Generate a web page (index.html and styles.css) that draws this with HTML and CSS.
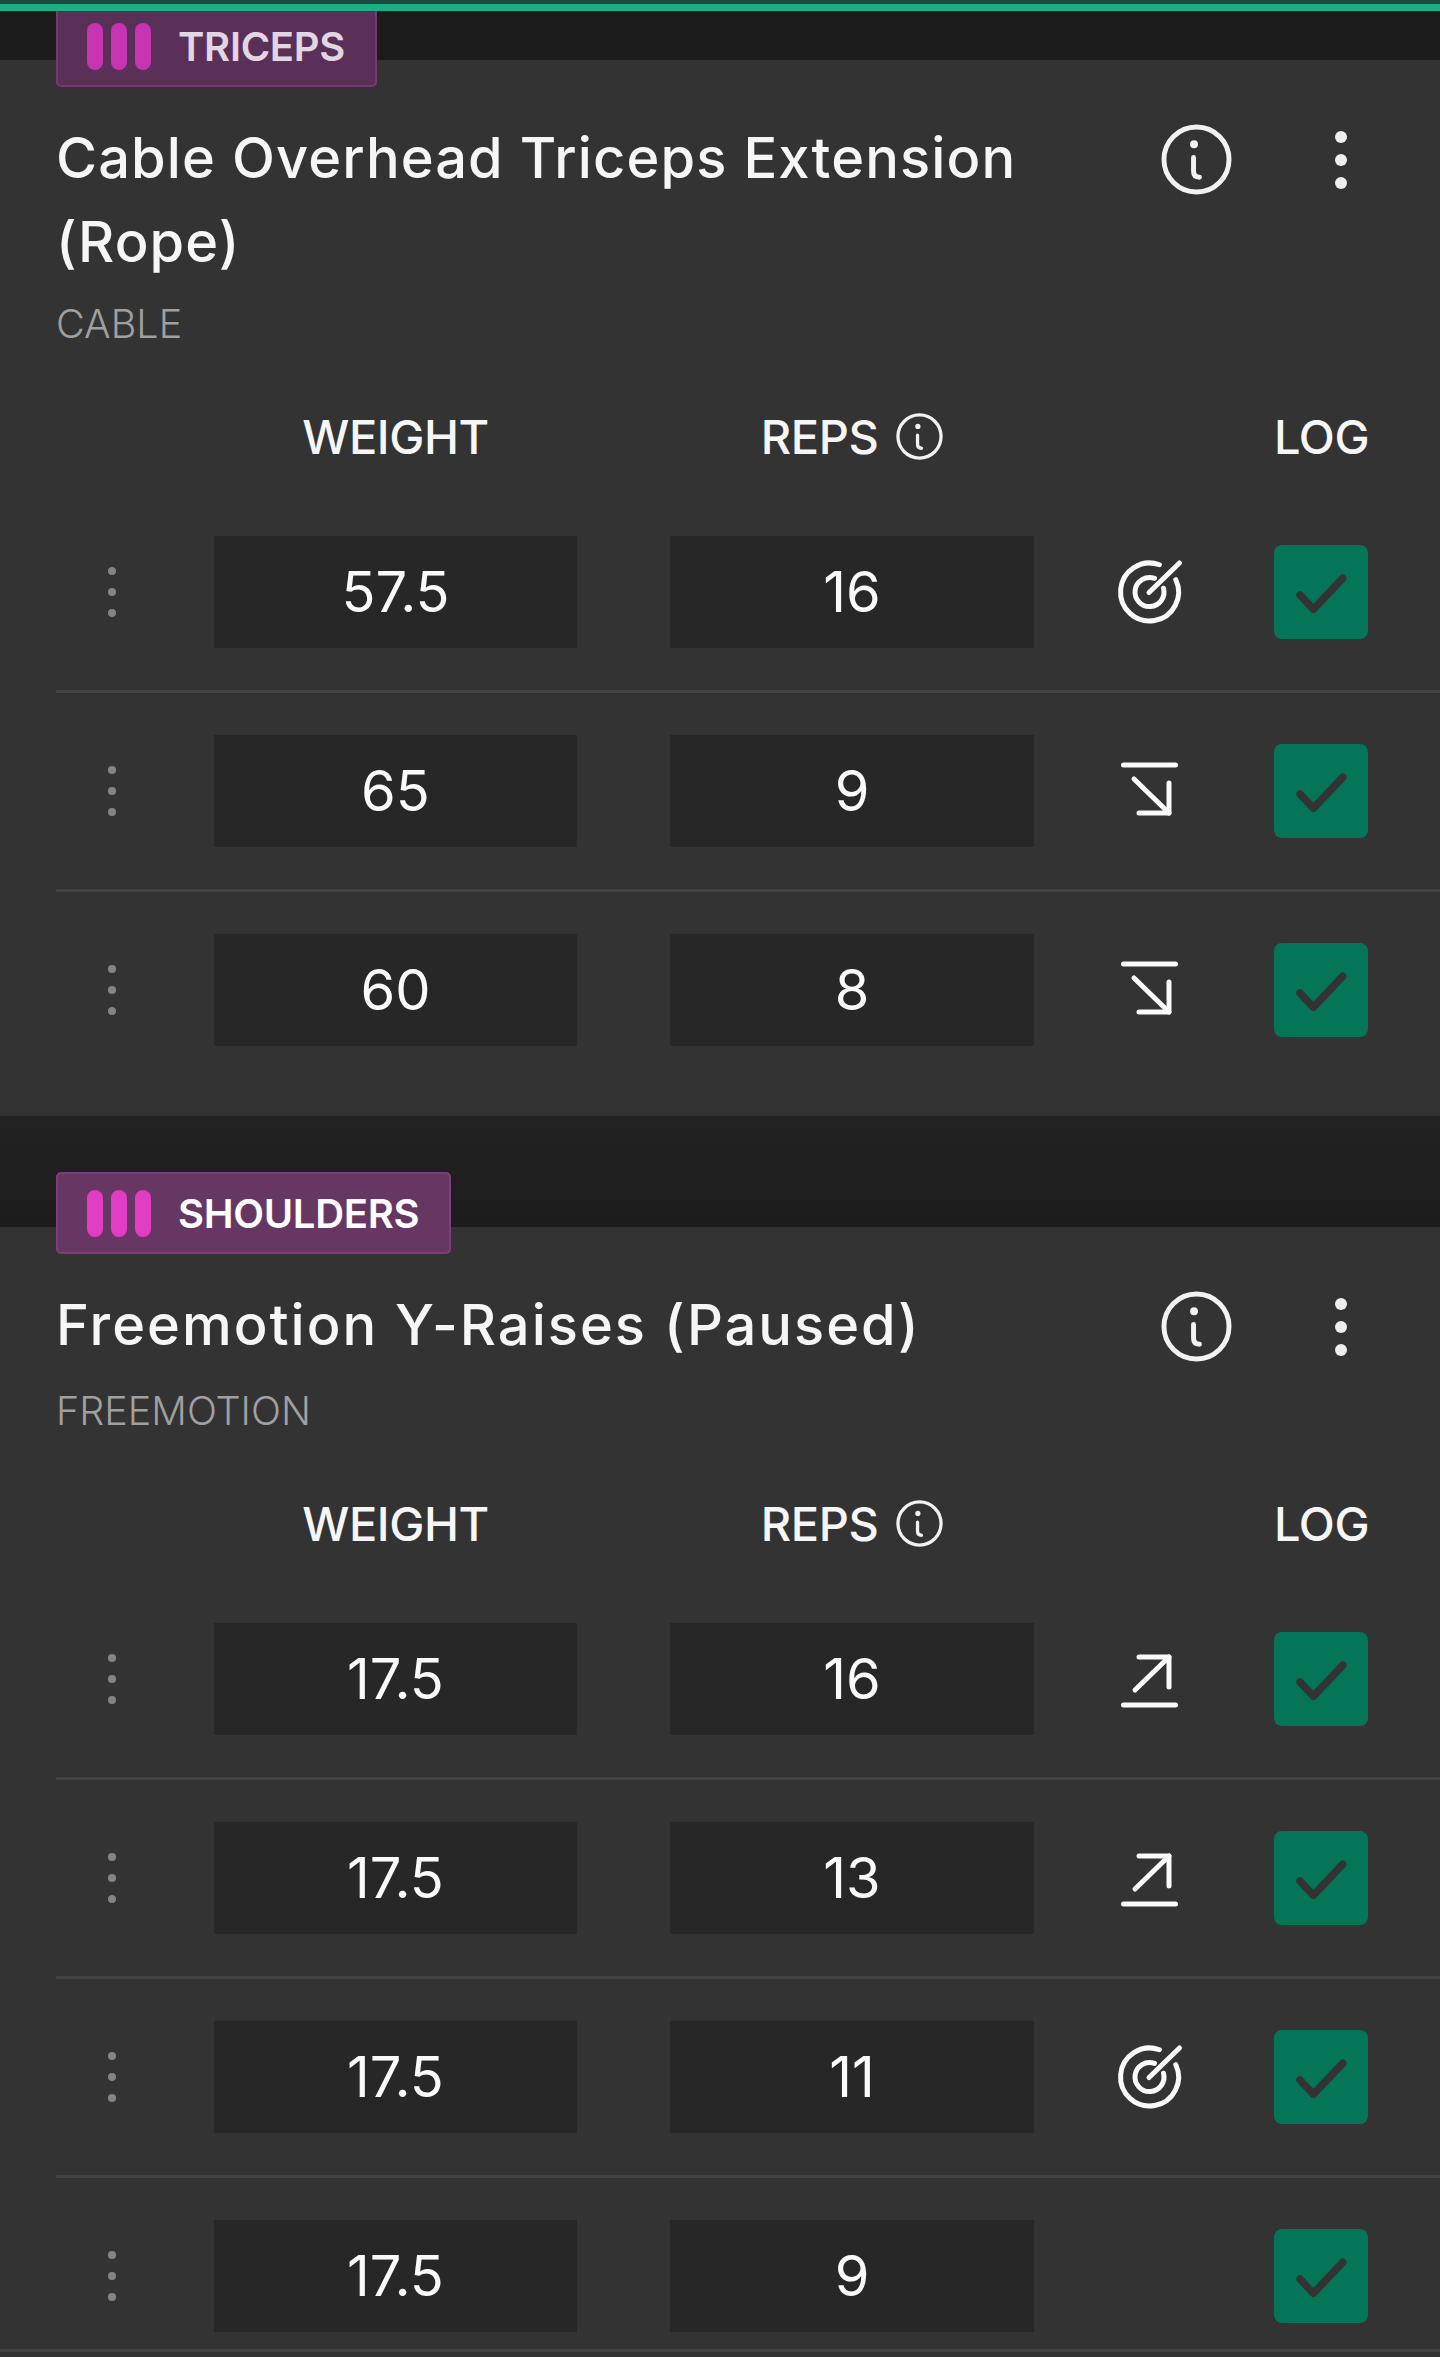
FILE: index.html
```html
<!DOCTYPE html>
<html lang="en">
<head>
    <meta charset="UTF-8">
    <meta name="viewport" content="width=device-width, initial-scale=1.0">
    <title>Workout Log</title>
    <link rel="stylesheet" href="styles.css">
</head>
<body>

    <svg class="defs" width="0" height="0">
        <symbol id="i-info" viewBox="0 0 72 72">
            <circle cx="36" cy="36" r="33" fill="none" stroke="currentColor" stroke-width="5"/>
            <circle cx="33.5" cy="20.5" r="4" fill="currentColor"/>
            <path d="M33 34V48Q33 54 39 54" fill="none" stroke="currentColor" stroke-width="5" stroke-linecap="round"/>
        </symbol>
        <symbol id="i-target" viewBox="0 0 72 72">
            <g fill="none" stroke="currentColor" stroke-width="5" stroke-linecap="round">
                <path d="M62.8 23.7A29 29 0 1 1 46.4 8.75"/>
                <path d="M50.5 32.2A14.5 14.5 0 1 1 41.5 22.4"/>
                <path d="M36 36.5L66.5 7"/>
            </g>
        </symbol>
        <symbol id="i-down" viewBox="0 0 72 72">
            <g fill="none" stroke="currentColor" stroke-width="5" stroke-linecap="round" stroke-linejoin="round">
                <path d="M10.5 10H62.5"/>
                <path d="M21 24L56 58"/>
                <path d="M56 28V58H26"/>
            </g>
        </symbol>
        <symbol id="i-up" viewBox="0 0 72 72">
            <g fill="none" stroke="currentColor" stroke-width="5" stroke-linecap="round" stroke-linejoin="round">
                <path d="M10.5 62H62.5"/>
                <path d="M22 47L56 14"/>
                <path d="M26 14H56V44"/>
            </g>
        </symbol>
        <symbol id="i-check" viewBox="0 0 94 94">
            <path d="M26 50L39.3 64.3L68.7 33.3" fill="none" stroke="currentColor" stroke-width="7.5" stroke-linecap="round" stroke-linejoin="round"/>
        </symbol>
    </svg>

    <div class="progress"></div>

    <section class="group group-first">
        <div class="badge badge-dim">
            <span class="pill"></span><span class="pill"></span><span class="pill"></span>
            <span class="badge-name">TRICEPS</span>
        </div>
        <div class="card">
            <div class="head">
                <h2 class="title">Cable Overhead Triceps Extension<br>(Rope)</h2>
                <div class="actions">
                    <svg class="info-big"><use href="#i-info"/></svg>
                    <div class="more"><span></span><span></span><span></span></div>
                </div>
            </div>
            <div class="equipment">CABLE</div>

            <div class="table-head">
                <div class="col-drag"></div>
                <div class="col-field">WEIGHT</div>
                <div class="col-field col-reps">REPS <svg class="info-small"><use href="#i-info"/></svg></div>
                <div class="col-status"></div>
                <div class="col-log">LOG</div>
            </div>

            <div class="set">
                <div class="col-drag"><div class="drag"><span></span><span></span><span></span></div></div>
                <div class="col-field value">57.5</div>
                <div class="col-field value">16</div>
                <div class="col-status"><svg class="status-icon"><use href="#i-target"/></svg></div>
                <div class="col-log"><div class="check"><svg><use href="#i-check"/></svg></div></div>
            </div>
            <div class="set">
                <div class="col-drag"><div class="drag"><span></span><span></span><span></span></div></div>
                <div class="col-field value">65</div>
                <div class="col-field value">9</div>
                <div class="col-status"><svg class="status-icon"><use href="#i-down"/></svg></div>
                <div class="col-log"><div class="check"><svg><use href="#i-check"/></svg></div></div>
            </div>
            <div class="set set-last">
                <div class="col-drag"><div class="drag"><span></span><span></span><span></span></div></div>
                <div class="col-field value">60</div>
                <div class="col-field value">8</div>
                <div class="col-status"><svg class="status-icon"><use href="#i-down"/></svg></div>
                <div class="col-log"><div class="check"><svg><use href="#i-check"/></svg></div></div>
            </div>
        </div>
    </section>

    <section class="group">
        <div class="badge">
            <span class="pill"></span><span class="pill"></span><span class="pill"></span>
            <span class="badge-name">SHOULDERS</span>
        </div>
        <div class="card card-end">
            <div class="head">
                <h2 class="title title-wide">Freemotion Y-Raises (Paused)</h2>
                <div class="actions">
                    <svg class="info-big"><use href="#i-info"/></svg>
                    <div class="more"><span></span><span></span><span></span></div>
                </div>
            </div>
            <div class="equipment">FREEMOTION</div>

            <div class="table-head">
                <div class="col-drag"></div>
                <div class="col-field">WEIGHT</div>
                <div class="col-field col-reps">REPS <svg class="info-small"><use href="#i-info"/></svg></div>
                <div class="col-status"></div>
                <div class="col-log">LOG</div>
            </div>

            <div class="set">
                <div class="col-drag"><div class="drag"><span></span><span></span><span></span></div></div>
                <div class="col-field value">17.5</div>
                <div class="col-field value">16</div>
                <div class="col-status"><svg class="status-icon"><use href="#i-up"/></svg></div>
                <div class="col-log"><div class="check"><svg><use href="#i-check"/></svg></div></div>
            </div>
            <div class="set">
                <div class="col-drag"><div class="drag"><span></span><span></span><span></span></div></div>
                <div class="col-field value">17.5</div>
                <div class="col-field value">13</div>
                <div class="col-status"><svg class="status-icon"><use href="#i-up"/></svg></div>
                <div class="col-log"><div class="check"><svg><use href="#i-check"/></svg></div></div>
            </div>
            <div class="set">
                <div class="col-drag"><div class="drag"><span></span><span></span><span></span></div></div>
                <div class="col-field value">17.5</div>
                <div class="col-field value">11</div>
                <div class="col-status"><svg class="status-icon"><use href="#i-target"/></svg></div>
                <div class="col-log"><div class="check"><svg><use href="#i-check"/></svg></div></div>
            </div>
            <div class="set set-end">
                <div class="col-drag"><div class="drag"><span></span><span></span><span></span></div></div>
                <div class="col-field value">17.5</div>
                <div class="col-field value">9</div>
                <div class="col-status"></div>
                <div class="col-log"><div class="check"><svg><use href="#i-check"/></svg></div></div>
            </div>
            <div class="card-line"></div>
        </div>
    </section>

</body>
</html>
```

FILE: styles.css
```css
body {
    margin: 0;
    background: #202020;
    color: #fff;
    font-family: Inter, "Liberation Sans", sans-serif;
}

.defs {
    position: absolute;
}

.progress {
    position: relative;
    z-index: 2;
    height: 7px;
    background: #1ab083;
    border-top: 4px solid #1c4a3e;
}

.group {
    padding-top: 56px;
    background: linear-gradient(#222, #1c1c1c 110px);
}

.group-first {
    margin-top: -6px;
    padding-top: 0;
    background: #1b1b1b;
}

/* muscle tag sits half over the card */
.badge {
    position: relative;
    z-index: 1;
    box-sizing: border-box;
    display: inline-flex;
    align-items: center;
    gap: 8px;
    height: 82px;
    margin: 0 0 -27px 56px;
    padding: 0 30px 0 29px;
    vertical-align: top;
    background: #673763;
    border: 2px solid #7f3d7d;
    border-radius: 5px;
}

.badge-dim {
    background: #5a3058;
    border-color: #743a72;
}

.pill {
    width: 16px;
    height: 47px;
    background: #e03cc4;
    border-radius: 8px;
}

.badge-dim .pill {
    background: #c833b2;
}

.badge-name {
    margin-left: 19px;
    font-size: 40px;
    font-weight: 600;
    letter-spacing: -0.3px;
}

.badge-dim .badge-name {
    color: #e2d6e2;
}

.card {
    background: #333;
}

.card-end {
    padding-bottom: 5px;
}

.head {
    display: flex;
    padding: 56px 93px 0 56px;
}

.title {
    flex: 1;
    margin: 0;
    font-size: 56px;
    font-weight: 500;
    line-height: 84px;
    letter-spacing: 1.1px;
    color: #f6f6f6;
}

.title-wide {
    letter-spacing: 2px;
}

.actions {
    box-sizing: border-box;
    display: flex;
    align-items: flex-start;
    gap: 103px;
    height: 88px;
    padding-top: 8px;
}

.info-big {
    width: 71px;
    height: 71px;
    color: #f2f2f2;
}

.info-small {
    width: 47px;
    height: 47px;
    margin-left: 18px;
    color: #f2f2f2;
}

.more {
    display: flex;
    flex-direction: column;
    gap: 11px;
    padding-top: 7px;
}

.more span {
    width: 12px;
    height: 12px;
    background: #eee;
    border-radius: 50%;
}

.equipment {
    margin-top: 16px;
    padding-left: 56px;
    font-size: 39.5px;
    font-weight: 300;
    line-height: 48px;
    color: #a0a0a0;
}

.table-head,
.set {
    display: flex;
    align-items: center;
    margin-left: 56px;
}

.table-head {
    height: 48px;
    margin-top: 64px;
    margin-bottom: 34px;
    font-size: 47px;
    font-weight: 500;
    letter-spacing: -0.4px;
    color: #f6f6f6;
}

.set {
    padding: 42px 0;
    border-bottom: 3px solid #444;
}

.set-last {
    padding-bottom: 70px;
    border-bottom: none;
}

.set-end {
    padding-bottom: 17px;
    border-bottom: none;
}

.card-line {
    height: 3px;
    background: #444;
}

.col-drag {
    width: 112px;
    margin-right: 46px;
    display: flex;
    justify-content: center;
}

.col-field {
    display: flex;
    align-items: center;
    justify-content: center;
    width: 363px;
}

.col-field + .col-field {
    width: 364px;
    margin-left: 93px;
}

.col-status {
    display: flex;
    justify-content: center;
    width: 230px;
}

.col-log {
    width: 94px;
    margin-left: 10px;
    text-align: center;
}

.value {
    height: 112px;
    background: #272727;
    font-size: 56px;
    font-weight: 400;
    color: #fafafa;
}

.drag {
    display: flex;
    flex-direction: column;
    gap: 13px;
}

.drag span {
    width: 8px;
    height: 8px;
    background: #858585;
    border-radius: 50%;
}

.status-icon {
    display: block;
    width: 72px;
    height: 72px;
    color: #fafafa;
}

.check {
    width: 94px;
    height: 94px;
    background: #057558;
    border-radius: 8px;
    color: #333;
}

.check svg {
    display: block;
    width: 94px;
    height: 94px;
}
```
